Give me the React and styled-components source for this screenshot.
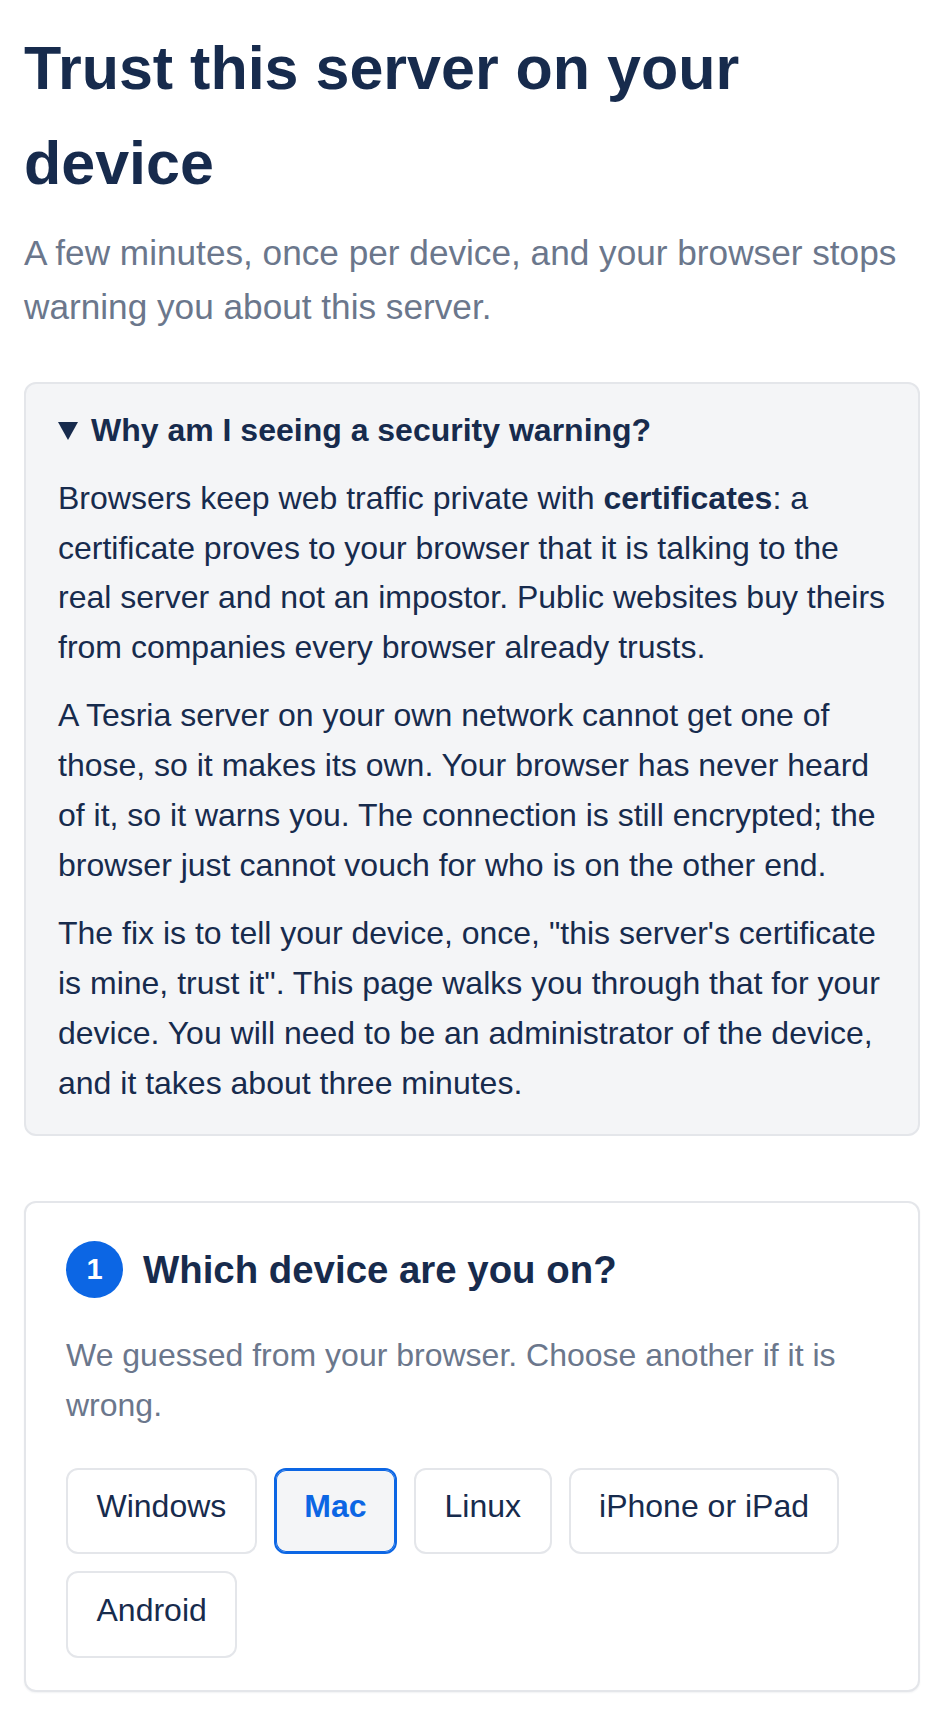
import React from "react";
import styled, { createGlobalStyle } from "styled-components";

const GlobalStyle = createGlobalStyle`
  * { box-sizing: border-box; }
  html, body { margin: 0; padding: 0; background: #ffffff; }
  body {
    font-family: "Liberation Sans", Arial, sans-serif;
    color: #172b4d;
    -webkit-font-smoothing: antialiased;
  }
`;

const Page = styled.main`
  padding: 21px 24px 26px;
  display: flex;
  flex-direction: column;
`;

const Title = styled.h1`
  margin: 0 0 15px;
  font-size: 61px;
  line-height: 95px;
  font-weight: 700;
  color: #172b4d;
`;

const Lead = styled.p`
  margin: 0 0 48px;
  font-size: 35.2px;
  line-height: 54px;
  color: #6b778c;
`;

const Details = styled.details`
  background: #f4f5f7;
  border: 2px solid #e4e6ea;
  border-radius: 12px;
  padding: 22px 32px 26px;
  margin-bottom: 65px;
`;

const Summary = styled.summary`
  list-style: none;
  display: flex;
  align-items: center;
  gap: 13px;
  font-size: 32px;
  line-height: 49.6px;
  font-weight: 700;
  color: #172b4d;
  cursor: pointer;
  &::-webkit-details-marker { display: none; }
`;

const Caret = styled.span`
  width: 0;
  height: 0;
  border-left: 10.5px solid transparent;
  border-right: 10.5px solid transparent;
  border-top: 18px solid #172b4d;
  flex: none;
`;

const BodyText = styled.p`
  margin: 18px 0 0;
  font-size: 32px;
  line-height: 49.9px;
  color: #172b4d;
  strong { font-weight: 700; }
`;

const Card = styled.section`
  background: #ffffff;
  border: 2px solid #e4e6ea;
  border-radius: 12px;
  padding: 37px 40px 32px;
  box-shadow: 0 1px 2px rgba(9, 30, 66, 0.06);
`;

const StepHeader = styled.div`
  display: flex;
  align-items: center;
  gap: 20px;
  margin-bottom: 32px;
`;

const StepBadge = styled.span`
  width: 57px;
  height: 57px;
  border-radius: 50%;
  background: #0c66e4;
  color: #ffffff;
  display: flex;
  align-items: center;
  justify-content: center;
  font-size: 29px;
  font-weight: 700;
  flex: none;
`;

const StepTitle = styled.h2`
  margin: 0;
  font-size: 38.4px;
  line-height: 59px;
  font-weight: 700;
  color: #172b4d;
`;

const Hint = styled.p`
  margin: 0 0 37px;
  font-size: 32px;
  line-height: 49.6px;
  color: #6b778c;
`;

const Choices = styled.div`
  display: flex;
  flex-wrap: wrap;
  gap: 17px;
`;

const Choice = styled.button`
  font-family: inherit;
  font-size: 32px;
  line-height: 49.6px;
  padding: 12.5px 28.5px 20.5px;
  border-radius: 12px;
  border: 2px solid ${(p) => (p.$active ? "#0c66e4" : "#e4e6ea")};
  box-shadow: ${(p) => (p.$active ? "inset 0 0 0 1px #0c66e4" : "none")};
  background: ${(p) => (p.$active ? "#f4f5f7" : "#ffffff")};
  color: ${(p) => (p.$active ? "#0c66e4" : "#172b4d")};
  font-weight: ${(p) => (p.$active ? 700 : 400)};
  cursor: pointer;
`;

const devices = ["Windows", "Mac", "Linux", "iPhone or iPad", "Android"];

export default function App() {
  return (
    <>
      <GlobalStyle />
      <Page>
        <Title>Trust this server on your device</Title>
        <Lead>
          A few minutes, once per device, and your browser stops warning you
          about this server.
        </Lead>
        <Details open>
          <Summary>
            <Caret />
            Why am I seeing a security warning?
          </Summary>
          <BodyText>
            Browsers keep web traffic private with <strong>certificates</strong>:
            a certificate proves to your browser that it is talking to the real
            server and not an impostor. Public websites buy theirs from
            companies every browser already trusts.
          </BodyText>
          <BodyText>
            A Tesria server on your own network cannot get one of those, so it
            makes its own. Your browser has never heard of it, so it warns you.
            The connection is still encrypted; the browser just cannot vouch for
            who is on the other end.
          </BodyText>
          <BodyText>
            The fix is to tell your device, once, "this server's certificate is
            mine, trust it". This page walks you through that for your device.
            You will need to be an administrator of the device, and it takes
            about three minutes.
          </BodyText>
        </Details>
        <Card>
          <StepHeader>
            <StepBadge>1</StepBadge>
            <StepTitle>Which device are you on?</StepTitle>
          </StepHeader>
          <Hint>
            We guessed from your browser. Choose another if it is wrong.
          </Hint>
          <Choices>
            {devices.map((d) => (
              <Choice key={d} $active={d === "Mac"}>
                {d}
              </Choice>
            ))}
          </Choices>
        </Card>
      </Page>
    </>
  );
}
